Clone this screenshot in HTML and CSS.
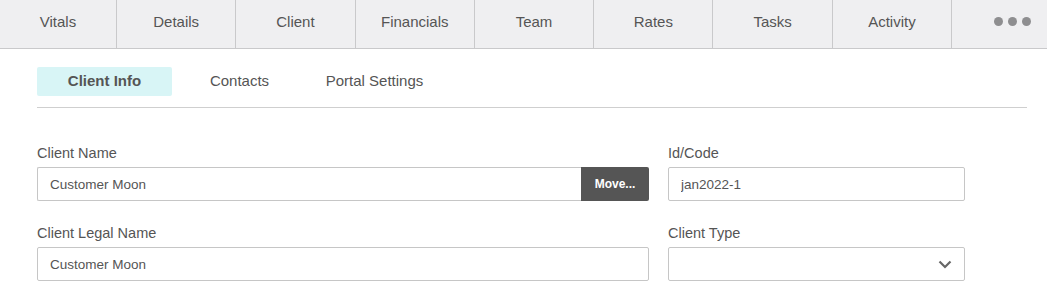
FILE: index.html
```html
<!DOCTYPE html>
<html lang="en">
<head>
    <meta charset="UTF-8">
    <meta name="viewport" content="width=device-width, initial-scale=1.0">
    <title>Client</title>
    <link rel="stylesheet" href="styles.css">
</head>
<body>
    <nav class="main-tabs">
        <a class="main-tab">Vitals</a>
        <a class="main-tab">Details</a>
        <a class="main-tab">Client</a>
        <a class="main-tab">Financials</a>
        <a class="main-tab">Team</a>
        <a class="main-tab">Rates</a>
        <a class="main-tab">Tasks</a>
        <a class="main-tab">Activity</a>
        <a class="main-tab more-tab">
            <span class="dot"></span><span class="dot"></span><span class="dot"></span>
        </a>
    </nav>

    <div class="content">
        <div class="sub-tabs">
            <a class="sub-tab active">Client Info</a>
            <a class="sub-tab">Contacts</a>
            <a class="sub-tab">Portal Settings</a>
        </div>

        <form class="client-form">
            <div class="field">
                <label class="field-label">Client Name</label>
                <div class="input-group">
                    <input class="text-input" type="text" value="Customer Moon">
                    <button type="button" class="move-button">Move...</button>
                </div>
            </div>

            <div class="field">
                <label class="field-label">Id/Code</label>
                <input class="text-input" type="text" value="jan2022-1">
            </div>

            <div class="field">
                <label class="field-label">Client Legal Name</label>
                <input class="text-input" type="text" value="Customer Moon">
            </div>

            <div class="field">
                <label class="field-label">Client Type</label>
                <div class="select-box">
                    <svg class="chevron" width="14" height="9" viewBox="0 0 14 9">
                        <path d="M1.5 1.5 L7 7 L12.5 1.5" fill="none" stroke="#666" stroke-width="2.2"/>
                    </svg>
                </div>
            </div>
        </form>
    </div>
</body>
</html>
```

FILE: styles.css
```css
* {
    margin: 0;
    padding: 0;
    box-sizing: border-box;
}

body {
    font-family: 'Liberation Sans', Arial, sans-serif;
    background: #ffffff;
    color: #555555;
}

/* top tab bar */
.main-tabs {
    display: grid;
    grid-template-columns: 117px repeat(7, 119.3px) 1fr;
    height: 49px;
    background: #efeff1;
    border-bottom: 1px solid #c9c9cb;
}

.main-tab {
    display: flex;
    align-items: center;
    justify-content: center;
    font-size: 15px;
    color: #555555;
    border-right: 1px solid #c9c9cb;
    padding-bottom: 5px;
    cursor: pointer;
}

.more-tab {
    border-right: none;
    gap: 5px;
    padding-left: 26px;
}

.dot {
    width: 9px;
    height: 9px;
    border-radius: 50%;
    background: #8e8e90;
}

.content {
    padding: 18px 20px 0 37px;
}

/* sub tabs */
.sub-tabs {
    display: flex;
    border-bottom: 1px solid #cfcfcf;
    padding-bottom: 11px;
}

.sub-tab {
    width: 135px;
    height: 29px;
    display: flex;
    align-items: center;
    justify-content: center;
    font-size: 15px;
    color: #555555;
    border-radius: 2px;
    padding-bottom: 2px;
    cursor: pointer;
}

.sub-tab.active {
    background: #d8f5f6;
    font-weight: bold;
}

/* form */
.client-form {
    display: grid;
    grid-template-columns: 612px 297px;
    column-gap: 19px;
    row-gap: 24px;
    padding-top: 37px;
}

.field-label {
    display: block;
    font-size: 14.5px;
    line-height: 17px;
    margin-bottom: 5px;
    color: #555555;
}

.input-group {
    display: flex;
}

.text-input {
    width: 100%;
    height: 34px;
    border: 1px solid #c6c6c6;
    border-radius: 2px;
    padding: 0 12px;
    font-family: inherit;
    font-size: 13.5px;
    color: #555555;
    background: #ffffff;
}

.input-group .text-input {
    border-right: none;
    border-radius: 2px 0 0 2px;
}

.move-button {
    flex: 0 0 68px;
    height: 34px;
    border: none;
    border-radius: 0 2px 2px 0;
    background: #555555;
    color: #ffffff;
    font-family: inherit;
    font-size: 12px;
    font-weight: bold;
    cursor: pointer;
}

.select-box {
    height: 34px;
    border: 1px solid #c6c6c6;
    border-radius: 2px;
    display: flex;
    align-items: center;
    justify-content: flex-end;
    padding-right: 12px;
}
```
